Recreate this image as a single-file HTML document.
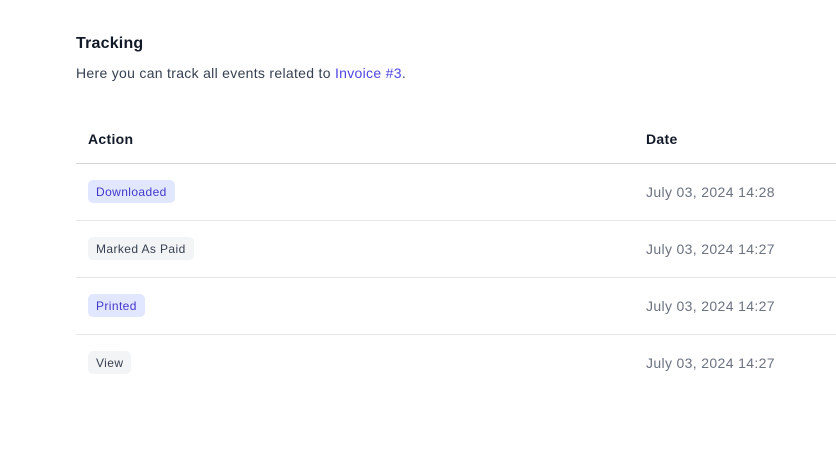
<!DOCTYPE html>
<html><head><style>
body{margin:0;background:#fff;font-family:"Liberation Sans",sans-serif;width:836px;height:451px;overflow:hidden;position:relative}
.t{position:absolute;left:76px;top:35px;font-size:16px;font-weight:bold;color:#111827;letter-spacing:0.2px}
.s{position:absolute;left:76px;top:65px;font-size:14px;color:#374151;letter-spacing:0.3px}
.s a{color:#4f46e5;text-decoration:none}
.h{position:absolute;top:131px;font-size:14px;font-weight:bold;color:#111827;letter-spacing:0.3px}
.line{position:absolute;left:76px;right:0;height:1px;background:#e5e7eb}
.b{position:absolute;left:88px;height:23px;line-height:24px;padding:0 8px;border-radius:5px;font-size:12px;background:#f3f4f6;color:#374151;letter-spacing:0.4px}
.b.i{background:#e0e7ff;color:#4338ca}
.d{position:absolute;left:646px;font-size:14px;color:#6b7280;letter-spacing:0.35px}
</style></head><body>
<div class="t">Tracking</div>
<div class="s">Here you can track all events related to <a>Invoice #3</a>.</div>
<div class="h" style="left:88px">Action</div>
<div class="h" style="left:646px">Date</div>
<div class="line" style="top:163px;background:#d1d5db"></div>
<div class="b i" style="top:180px">Downloaded</div><div class="d" style="top:184px">July 03, 2024 14:28</div>
<div class="line" style="top:220px"></div>
<div class="b" style="top:237px">Marked As Paid</div><div class="d" style="top:241px">July 03, 2024 14:27</div>
<div class="line" style="top:277px"></div>
<div class="b i" style="top:294px">Printed</div><div class="d" style="top:298px">July 03, 2024 14:27</div>
<div class="line" style="top:334px"></div>
<div class="b" style="top:351px">View</div><div class="d" style="top:355px">July 03, 2024 14:27</div>
</body></html>
